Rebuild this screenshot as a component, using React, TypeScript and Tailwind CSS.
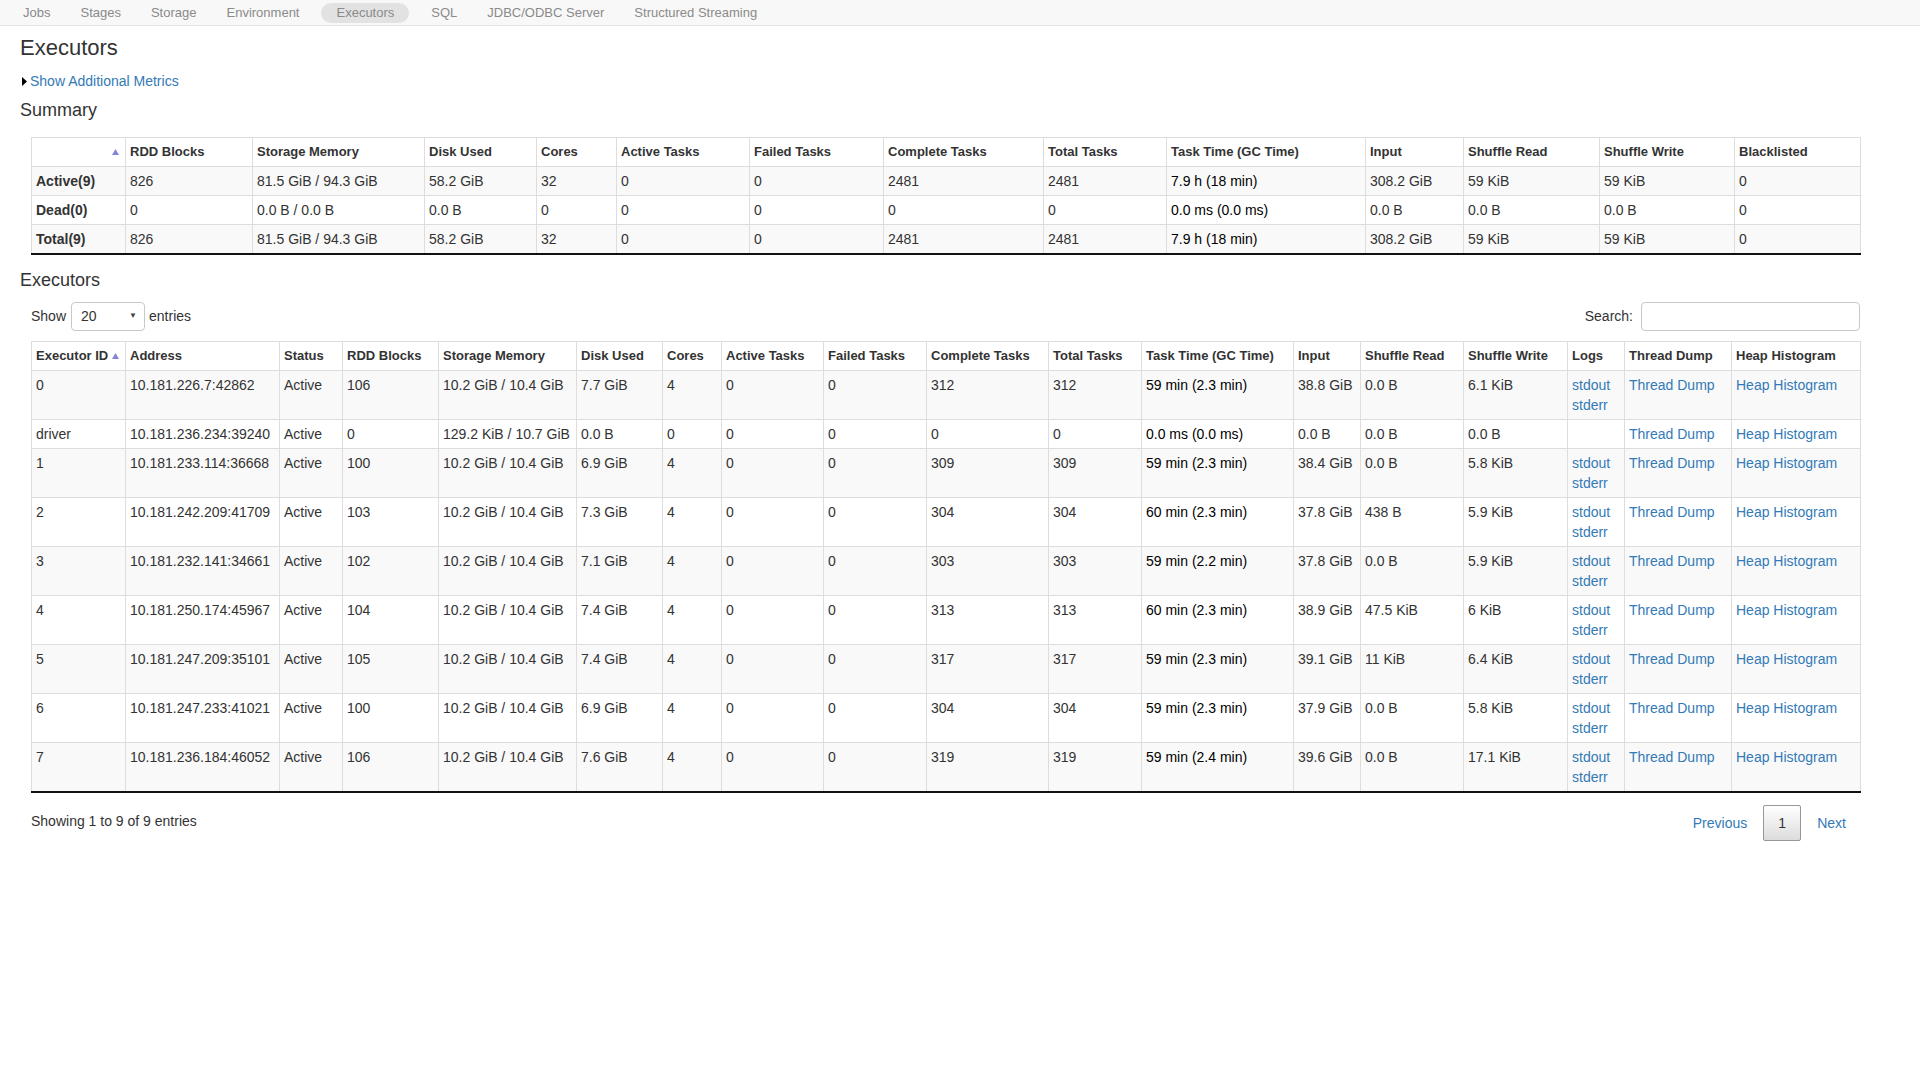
import React from "react";

const navItems = ["Jobs", "Stages", "Storage", "Environment", "Executors", "SQL", "JDBC/ODBC Server", "Structured Streaming"];

const summaryCols = [
  { label: "", w: "w-[94px]" },
  { label: "RDD Blocks", w: "w-[127px]" },
  { label: "Storage Memory", w: "w-[172px]" },
  { label: "Disk Used", w: "w-[112px]" },
  { label: "Cores", w: "w-[80px]" },
  { label: "Active Tasks", w: "w-[133px]" },
  { label: "Failed Tasks", w: "w-[134px]" },
  { label: "Complete Tasks", w: "w-[160px]" },
  { label: "Total Tasks", w: "w-[123px]" },
  { label: "Task Time (GC Time)", w: "w-[199px]" },
  { label: "Input", w: "w-[98px]" },
  { label: "Shuffle Read", w: "w-[136px]" },
  { label: "Shuffle Write", w: "w-[135px]" },
  { label: "Blacklisted", w: "w-[126px]" },
];

const summaryRows = [
  ["Active(9)", "826", "81.5 GiB / 94.3 GiB", "58.2 GiB", "32", "0", "0", "2481", "2481", "7.9 h (18 min)", "308.2 GiB", "59 KiB", "59 KiB", "0"],
  ["Dead(0)", "0", "0.0 B / 0.0 B", "0.0 B", "0", "0", "0", "0", "0", "0.0 ms (0.0 ms)", "0.0 B", "0.0 B", "0.0 B", "0"],
  ["Total(9)", "826", "81.5 GiB / 94.3 GiB", "58.2 GiB", "32", "0", "0", "2481", "2481", "7.9 h (18 min)", "308.2 GiB", "59 KiB", "59 KiB", "0"],
];

const execCols = [
  { label: "Executor ID", w: "w-[94px]" },
  { label: "Address", w: "w-[154px]" },
  { label: "Status", w: "w-[63px]" },
  { label: "RDD Blocks", w: "w-[96px]" },
  { label: "Storage Memory", w: "w-[138px]" },
  { label: "Disk Used", w: "w-[86px]" },
  { label: "Cores", w: "w-[59px]" },
  { label: "Active Tasks", w: "w-[102px]" },
  { label: "Failed Tasks", w: "w-[103px]" },
  { label: "Complete Tasks", w: "w-[122px]" },
  { label: "Total Tasks", w: "w-[93px]" },
  { label: "Task Time (GC Time)", w: "w-[152px]" },
  { label: "Input", w: "w-[67px]" },
  { label: "Shuffle Read", w: "w-[103px]" },
  { label: "Shuffle Write", w: "w-[104px]" },
  { label: "Logs", w: "w-[57px]" },
  { label: "Thread Dump", w: "w-[107px]" },
  { label: "Heap Histogram", w: "w-[129px]" },
];

type Exec = {
  id: string;
  addr: string;
  rdd: string;
  mem: string;
  disk: string;
  cores: string;
  done: string;
  time: string;
  input: string;
  read: string;
  write: string;
  logs: boolean;
};

const executors: Exec[] = [
  { id: "0", addr: "10.181.226.7:42862", rdd: "106", mem: "10.2 GiB / 10.4 GiB", disk: "7.7 GiB", cores: "4", done: "312", time: "59 min (2.3 min)", input: "38.8 GiB", read: "0.0 B", write: "6.1 KiB", logs: true },
  { id: "driver", addr: "10.181.236.234:39240", rdd: "0", mem: "129.2 KiB / 10.7 GiB", disk: "0.0 B", cores: "0", done: "0", time: "0.0 ms (0.0 ms)", input: "0.0 B", read: "0.0 B", write: "0.0 B", logs: false },
  { id: "1", addr: "10.181.233.114:36668", rdd: "100", mem: "10.2 GiB / 10.4 GiB", disk: "6.9 GiB", cores: "4", done: "309", time: "59 min (2.3 min)", input: "38.4 GiB", read: "0.0 B", write: "5.8 KiB", logs: true },
  { id: "2", addr: "10.181.242.209:41709", rdd: "103", mem: "10.2 GiB / 10.4 GiB", disk: "7.3 GiB", cores: "4", done: "304", time: "60 min (2.3 min)", input: "37.8 GiB", read: "438 B", write: "5.9 KiB", logs: true },
  { id: "3", addr: "10.181.232.141:34661", rdd: "102", mem: "10.2 GiB / 10.4 GiB", disk: "7.1 GiB", cores: "4", done: "303", time: "59 min (2.2 min)", input: "37.8 GiB", read: "0.0 B", write: "5.9 KiB", logs: true },
  { id: "4", addr: "10.181.250.174:45967", rdd: "104", mem: "10.2 GiB / 10.4 GiB", disk: "7.4 GiB", cores: "4", done: "313", time: "60 min (2.3 min)", input: "38.9 GiB", read: "47.5 KiB", write: "6 KiB", logs: true },
  { id: "5", addr: "10.181.247.209:35101", rdd: "105", mem: "10.2 GiB / 10.4 GiB", disk: "7.4 GiB", cores: "4", done: "317", time: "59 min (2.3 min)", input: "39.1 GiB", read: "11 KiB", write: "6.4 KiB", logs: true },
  { id: "6", addr: "10.181.247.233:41021", rdd: "100", mem: "10.2 GiB / 10.4 GiB", disk: "6.9 GiB", cores: "4", done: "304", time: "59 min (2.3 min)", input: "37.9 GiB", read: "0.0 B", write: "5.8 KiB", logs: true },
  { id: "7", addr: "10.181.236.184:46052", rdd: "106", mem: "10.2 GiB / 10.4 GiB", disk: "7.6 GiB", cores: "4", done: "319", time: "59 min (2.4 min)", input: "39.6 GiB", read: "0.0 B", write: "17.1 KiB", logs: true },
];

const SortUp = () => (
  <svg width="7" height="6" viewBox="0 0 7 6" className="shrink-0">
    <path d="M3.5 0 L7 6 L0 6 Z" fill="#8484d8" />
  </svg>
);

const th = "border border-[#ddd] px-[4px] py-[4px] text-left align-bottom text-[13px] font-bold leading-5 whitespace-nowrap";
const td = "border border-[#ddd] px-[4px] py-[4px] align-top leading-5 whitespace-nowrap";
const link = "text-[#337ab7] hover:underline cursor-pointer";

const App = () => {
  return (
    <div className="min-h-[1080px] bg-white text-[14px] text-[#333] font-['Liberation_Sans',Arial,sans-serif]">
      {/* top nav */}
      <div className="h-[26px] bg-[#f8f8f8] border-b border-[#e5e5e5] flex pl-[8px] pt-[3px]">
        {navItems.map((n) => (
          <div
            key={n}
            className={`h-[20px] px-[15px] text-[13px] leading-[20px] text-[#8a8a8a] ${
              n === "Executors" ? "mx-[7px] bg-[#e2e2e2] rounded-full" : ""
            }`}
          >
            {n}
          </div>
        ))}
      </div>

      <div className="px-[20px]">
        <div className="mt-[7px] h-[30px] text-[22px] leading-[30px] text-[#333]">Executors</div>

        <div className="mt-[8px] h-[20px] flex items-center leading-5">
          <svg width="5" height="9" viewBox="0 0 5 9" className="ml-[2px] mr-[3px]">
            <path d="M0 0 L5 4.5 L0 9 Z" fill="#000" />
          </svg>
          <span className={link}>Show Additional Metrics</span>
        </div>

        <div className="mt-[7px] h-[24px] text-[18px] leading-[24px]">Summary</div>

        <table className="mt-[15px] ml-[11px] w-[1829px] table-fixed border-collapse">
          <colgroup>
            {summaryCols.map((c, i) => (
              <col key={i} className={c.w} />
            ))}
          </colgroup>
          <thead>
            <tr>
              {summaryCols.map((c, i) => (
                <th key={i} className={th}>
                  {i === 0 ? (
                    <div className="flex justify-end items-center h-5 pr-[2px]">
                      <SortUp />
                    </div>
                  ) : (
                    c.label
                  )}
                </th>
              ))}
            </tr>
          </thead>
          <tbody>
            {summaryRows.map((r, ri) => (
              <tr key={ri} className={ri % 2 === 0 ? "bg-[#f9f9f9]" : "bg-white"}>
                {r.map((v, ci) => (
                  <td
                    key={ci}
                    className={`${td} ${ci === 0 ? "font-bold" : ""} ${ci === 9 ? "text-black" : ""} ${
                      ri === summaryRows.length - 1 ? "border-b-2 border-b-[#111]" : ""
                    }`}
                  >
                    {v}
                  </td>
                ))}
              </tr>
            ))}
          </tbody>
        </table>

        <div className="mt-[13px] h-[24px] text-[18px] leading-[24px]">Executors</div>

        <div className="mt-[10px] ml-[11px] w-[1829px] h-[28px] flex items-center justify-between">
          <div className="flex items-center">
            <span>Show</span>
            <div className="ml-[5px] mr-[4px] w-[74px] h-[29px] border border-[#c8c8c8] rounded-[4px] flex items-center justify-between pl-[9px] pr-[7px] bg-white">
              <span>20</span>
              <span className="text-[8px] text-[#444]">▼</span>
            </div>
            <span>entries</span>
          </div>
          <div className="flex items-center">
            <span>Search:</span>
            <div className="ml-[8px] w-[219px] h-[29px] border border-[#c8c8c8] rounded-[4px] bg-white" />
          </div>
        </div>

        <table className="mt-[11px] ml-[11px] w-[1829px] table-fixed border-collapse">
          <colgroup>
            {execCols.map((c, i) => (
              <col key={i} className={c.w} />
            ))}
          </colgroup>
          <thead>
            <tr>
              {execCols.map((c, i) => (
                <th key={i} className={th}>
                  {i === 0 ? (
                    <div className="flex items-center gap-[4px]">
                      <span>{c.label}</span>
                      <SortUp />
                    </div>
                  ) : (
                    c.label
                  )}
                </th>
              ))}
            </tr>
          </thead>
          <tbody>
            {executors.map((e, ri) => {
              const last = ri === executors.length - 1 ? "border-b-2 border-b-[#111]" : "";
              const cells: React.ReactNode[] = [
                e.id,
                e.addr,
                "Active",
                e.rdd,
                e.mem,
                e.disk,
                e.cores,
                "0",
                "0",
                e.done,
                e.done,
                <span className="text-black">{e.time}</span>,
                e.input,
                e.read,
                e.write,
                e.logs ? (
                  <div className="flex flex-col">
                    <span className={link}>stdout</span>
                    <span className={link}>stderr</span>
                  </div>
                ) : (
                  ""
                ),
                <span className={link}>Thread Dump</span>,
                <span className={link}>Heap Histogram</span>,
              ];
              return (
                <tr key={e.id} className={ri % 2 === 0 ? "bg-[#f9f9f9]" : "bg-white"}>
                  {cells.map((c, ci) => (
                    <td key={ci} className={`${td} ${last}`}>
                      {c}
                    </td>
                  ))}
                </tr>
              );
            })}
          </tbody>
        </table>

        <div className="mt-[12px] ml-[11px] w-[1829px] flex items-start justify-between">
          <div className="pt-[6px] leading-5">Showing 1 to 9 of 9 entries</div>
          <div className="flex items-center">
            <span className={`${link} px-[14px] h-[36px] leading-[36px]`}>Previous</span>
            <span className="ml-[2px] w-[38px] h-[36px] leading-[34px] text-center border border-[#979797] rounded-[2px] bg-gradient-to-b from-white to-[#dcdcdc] text-[#333]">
              1
            </span>
            <span className={`${link} ml-[2px] px-[14px] h-[36px] leading-[36px]`}>Next</span>
          </div>
        </div>
      </div>
    </div>
  );
};

export default App;
